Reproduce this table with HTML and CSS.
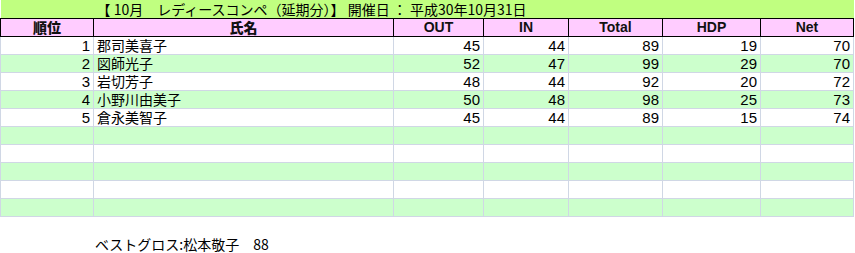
FILE: index.html
```html
<!DOCTYPE html>
<html lang="ja">
<head>
<meta charset="utf-8">
<link rel="stylesheet" href="styles.css">
</head>
<body>
<table class="score">
  <colgroup>
    <col class="c-rank"><col class="c-name"><col class="c-out"><col class="c-in"><col class="c-total"><col class="c-hdp"><col class="c-net">
  </colgroup>
  <tr class="title-row"><td></td><td colspan="6" class="title">【 10月　レディースコンペ（延期分）】 開催日 ： 平成30年10月31日</td></tr>
  <tr class="head">
    <th class="jp">順位</th><th class="jp">氏名</th><th>OUT</th><th>IN</th><th>Total</th><th>HDP</th><th>Net</th>
  </tr>
  <tr><td class="num">1</td><td class="name">郡司美喜子</td><td class="num">45</td><td class="num">44</td><td class="num">89</td><td class="num">19</td><td class="num">70</td></tr>
  <tr class="g"><td class="num">2</td><td class="name">図師光子</td><td class="num">52</td><td class="num">47</td><td class="num">99</td><td class="num">29</td><td class="num">70</td></tr>
  <tr><td class="num">3</td><td class="name">岩切芳子</td><td class="num">48</td><td class="num">44</td><td class="num">92</td><td class="num">20</td><td class="num">72</td></tr>
  <tr class="g"><td class="num">4</td><td class="name">小野川由美子</td><td class="num">50</td><td class="num">48</td><td class="num">98</td><td class="num">25</td><td class="num">73</td></tr>
  <tr><td class="num">5</td><td class="name">倉永美智子</td><td class="num">45</td><td class="num">44</td><td class="num">89</td><td class="num">15</td><td class="num">74</td></tr>
  <tr class="g"><td></td><td></td><td></td><td></td><td></td><td></td><td></td></tr>
  <tr><td></td><td></td><td></td><td></td><td></td><td></td><td></td></tr>
  <tr class="g"><td></td><td></td><td></td><td></td><td></td><td></td><td></td></tr>
  <tr><td></td><td></td><td></td><td></td><td></td><td></td><td></td></tr>
  <tr class="g"><td></td><td></td><td></td><td></td><td></td><td></td><td></td></tr>
</table>
<p class="best">ベストグロス:松本敬子　88</p>
</body>
</html>
```
FILE: styles.css
```css
html, body {
  margin: 0;
  padding: 0;
  background: #ffffff;
}
body {
  font-family: "Noto Sans CJK JP", sans-serif;
  font-size: 14px;
  color: #000;
}
.score {
  border-collapse: collapse;
  table-layout: fixed;
  width: 853px;
}
.c-rank { width: 93px; }
.c-name { width: 300px; }
.c-out { width: 90px; }
.c-in { width: 85px; }
.c-total { width: 94px; }
.c-hdp { width: 98px; }
.c-net { width: 93px; }
.score td, .score th {
  height: 17px;
  padding: 0 3px;
  line-height: 17px;
  white-space: nowrap;
  overflow: hidden;
  border: 1px solid #d0d7e5;
}
.title-row td {
  background: #c0ff80;
  border: none;
  height: 18px;
}
.title {
  padding-left: 3px;
  text-align: left;
  font-size: 14px;
}
.head th {
  background: #ffccff;
  border: 1px solid #000;
  font-family: "Liberation Sans", Arial, sans-serif;
  font-weight: bold;
  font-size: 14px;
  text-align: center;
  color: #111;
}
.head th.jp {
  font-family: "Noto Sans CJK JP", sans-serif;
  font-weight: 900;
}
.g td { background: #ccffcc; }
.num {
  text-align: right;
  font-family: "Liberation Sans", Arial, sans-serif;
  font-size: 15px;
}
.name {
  text-align: left;
  font-size: 14px;
}
.best {
  margin: 19px 0 0 95px;
  font-size: 14px;
  line-height: 17px;
}
```
